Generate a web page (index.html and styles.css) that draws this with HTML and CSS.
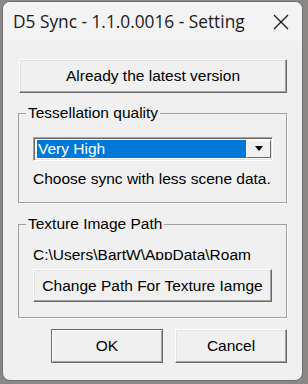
FILE: index.html
```html
<!DOCTYPE html>
<html lang="en">
<head>
    <meta charset="UTF-8">
    <title>D5 Sync - Setting</title>
    <link rel="stylesheet" href="styles.css">
</head>
<body>
    <div class="window">
        <div class="titlebar">
            <span class="title">D5 Sync - 1.1.0.0016 - Setting</span>
            <svg class="close" width="16" height="16" viewBox="0 0 16 16">
                <path d="M1 1 L15 15 M15 1 L1 15" stroke="#1a1a1a" stroke-width="1.3" fill="none"/>
            </svg>
        </div>

        <div class="content">
            <button class="btn wide">Already the latest version</button>

            <fieldset class="group quality">
                <legend>Tessellation quality</legend>
                <div class="combo">
                    <span class="combo-value">Very High</span>
                    <span class="combo-arrow">
                        <svg width="10" height="6" viewBox="0 0 10 6"><path d="M1 0 L9 0 L5 5 Z" fill="#000"/></svg>
                    </span>
                </div>
                <div class="hint">Choose sync with less scene data.</div>
            </fieldset>

            <fieldset class="group texture">
                <legend>Texture Image Path</legend>
                <div class="path">C:\Users\BartW\AppData\Roaming\D5 Sync\Texture</div>
                <button class="btn change">Change Path For Texture Iamge</button>
            </fieldset>

            <div class="actions">
                <button class="btn default">OK</button>
                <button class="btn">Cancel</button>
            </div>
        </div>
    </div>
</body>
</html>
```

FILE: styles.css
```css
* {
    margin: 0;
    padding: 0;
    box-sizing: border-box;
}

body {
    background: #8a8886;
    width: 308px;
    height: 384px;
    overflow: hidden;
    padding: 1px 0 0 2px;
}

.window {
    width: 301px;
    height: 380px;
    background: #f0f0f0;
    border: 1px solid #6f6f6f;
    border-radius: 8px;
    overflow: hidden;
    font-family: "Liberation Sans", Arial, sans-serif;
    font-size: 15.5px;
    color: #000;
}

.titlebar {
    height: 39px;
    background: #f3f3f3;
    display: flex;
    align-items: center;
    justify-content: space-between;
    padding: 0 13px 0 10px;
}

.title {
    font-family: "Open Sans", "Noto Sans", sans-serif;
    font-size: 17.3px;
    color: #1a1a1a;
}

.content {
    display: flex;
    flex-direction: column;
    padding: 18px 15px 0 16px;
}

.btn {
    font-family: "Liberation Sans", Arial, sans-serif;
    font-size: 15.5px;
    color: #000;
    background: #f0f0f0;
    border: 1px solid;
    border-color: #fff #696969 #696969 #fff;
    box-shadow: inset -1px -1px 0 #a0a0a0, inset 1px 1px 0 #e3e3e3;
}

.wide {
    height: 34px;
    width: 268px;
}

.group {
    border: 1px solid #a0a0a0;
    box-shadow: 1px 1px 0 #fff;
    width: 269px;
    padding: 0 0 0 14px;
    margin-left: -1px;
}

.group legend {
    margin-left: -7px;
    padding: 0 2px;
    line-height: 18px;
}

.quality {
    margin-top: 11px;
    height: 99px;
}

.combo {
    margin-top: 15px;
    width: 240px;
    height: 24px;
    display: flex;
    align-items: stretch;
    background: #fff;
    border: 1px solid;
    border-color: #a0a0a0 #fff #fff #a0a0a0;
    box-shadow: inset 1px 1px 0 #696969, inset -1px -1px 0 #e3e3e3;
    padding: 2px 1px 2px 3px;
}

.combo-value {
    flex: 1;
    background: #0078d7;
    color: #fff;
    line-height: 18px;
    padding-left: 1px;
}

.combo-arrow {
    width: 25px;
    background: #f0f0f0;
    border: 1px solid;
    border-color: #fff #696969 #696969 #fff;
    display: flex;
    align-items: center;
    justify-content: center;
}

.hint {
    margin-top: 9px;
}

.texture {
    margin-top: 12px;
    height: 103px;
}

.path {
    margin-top: 15px;
    width: 218px;
    height: 12px;
    line-height: 14px;
    overflow: hidden;
    white-space: nowrap;
}

.change {
    margin-top: 9px;
    width: 239px;
    height: 33px;
}

.actions {
    display: flex;
    justify-content: flex-end;
    gap: 12px;
    margin-top: 11px;
}

.actions .btn {
    width: 112px;
    height: 34px;
}

.default {
    border-color: #696969;
    box-shadow: inset 1px 1px 0 #fff, inset -1px -1px 0 #a0a0a0;
}
```
